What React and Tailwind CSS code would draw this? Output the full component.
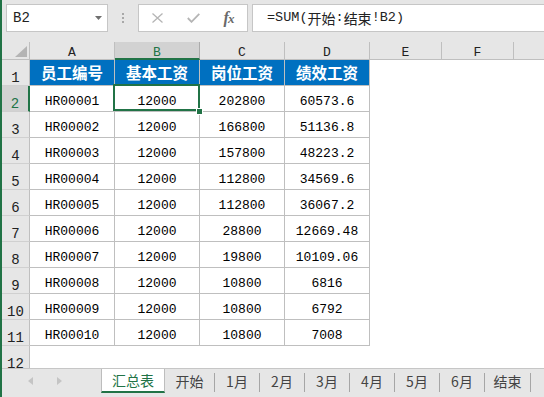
import React from "react";

const rows = [
  ["HR00001", "12000", "202800", "60573.6"],
  ["HR00002", "12000", "166800", "51136.8"],
  ["HR00003", "12000", "157800", "48223.2"],
  ["HR00004", "12000", "112800", "34569.6"],
  ["HR00005", "12000", "112800", "36067.2"],
  ["HR00006", "12000", "28800", "12669.48"],
  ["HR00007", "12000", "19800", "10109.06"],
  ["HR00008", "12000", "10800", "6816"],
  ["HR00009", "12000", "10800", "6792"],
  ["HR00010", "12000", "10800", "7008"],
];

const headers = ["员工编号", "基本工资", "岗位工资", "绩效工资"];
const tabs = [
  { t: "开始", w: "w-[50px]" },
  { t: "1月", w: "w-[45px]" },
  { t: "2月", w: "w-[45px]" },
  { t: "3月", w: "w-[45px]" },
  { t: "4月", w: "w-[45px]" },
  { t: "5月", w: "w-[45px]" },
  { t: "6月", w: "w-[45px]" },
  { t: "结束", w: "w-[46px]" },
];

const mono = "font-['Liberation_Mono','Noto_Sans_CJK_SC',monospace]";
const cjk = "font-['Noto_Sans_CJK_SC',sans-serif]";

function RowHeader({ n, selected }) {
  return (
    <div
      className={`w-[28px] shrink-0 flex justify-center pt-[11px] text-[14px] leading-[14px] ${mono} border-b border-[#d0d0d0] ${
        selected
          ? "bg-[#d2d2d2] text-[#217346] border-r-2 border-r-[#217346]"
          : "bg-[#e6e6e6] text-[#222] border-r border-r-[#bfbfbf]"
      }`}
    >
      {n}
    </div>
  );
}

export default function App() {
  return (
    <div className="w-[544px] h-[397px] overflow-hidden bg-white border-l-2 border-[#217346] flex flex-col">
      {/* toolbar */}
      <div className="h-[42px] shrink-0 bg-[#e6e6e6] flex items-start pt-[4px] pl-[4px]">
        <div className="w-[102px] h-[28px] bg-white border border-[#c6c6c6] flex items-center justify-between pl-[6px] pr-[5px]">
          <span className={`text-[14px] leading-none text-[#222] ${mono}`}>B2</span>
          <svg width="7" height="4" viewBox="0 0 7 4">
            <path d="M0 0 L7 0 L3.5 4 Z" fill="#6f6f6f" />
          </svg>
        </div>
        <div className="w-[30px] h-[28px] flex flex-col items-center justify-center gap-[2px]">
          <span className="w-[2px] h-[2px] bg-[#a8a8a8]" />
          <span className="w-[2px] h-[2px] bg-[#a8a8a8]" />
          <span className="w-[2px] h-[2px] bg-[#a8a8a8]" />
        </div>
        <div className="w-[110px] h-[28px] bg-white border border-[#c6c6c6] flex items-center">
          <span className="w-[36px] flex justify-center">
            <svg width="11" height="10" viewBox="0 0 11 10">
              <path d="M0.5 0.5 L10.5 9.5 M10.5 0.5 L0.5 9.5" stroke="#b5b5b5" strokeWidth="1.3" />
            </svg>
          </span>
          <span className="w-[36px] flex justify-center">
            <svg width="13" height="10" viewBox="0 0 13 10">
              <path d="M0.8 5 L4.5 8.8 L12.3 0.8" stroke="#b5b5b5" strokeWidth="1.8" fill="none" />
            </svg>
          </span>
          <span className="w-[36px] flex justify-center items-baseline italic font-semibold text-[16px] leading-none text-[#6a6a6a] font-['Liberation_Serif',serif]">
            f<span className="text-[13px] -ml-[1px]">x</span>
          </span>
        </div>
        <div className={`ml-[4px] flex-1 h-[28px] bg-white border border-r-0 border-[#c6c6c6] flex items-center pl-[14px] text-[13.5px] leading-none text-[#222] ${mono}`}>
          =SUM(<span className={`text-[14px] ${cjk}`}>开始</span>:<span className={`text-[14px] ${cjk}`}>结束</span>!B2)
        </div>
      </div>

      {/* sheet */}
      <div className="h-[326px] shrink-0 overflow-hidden flex flex-col">
        {/* column headers */}
        <div className={`h-[18px] shrink-0 flex bg-[#e6e6e6] text-[13px] leading-none ${mono}`}>
          <div className="w-[28px] shrink-0 border-r border-b border-[#bfbfbf] flex items-end justify-end pr-[2px] pb-[2px]">
            <svg width="12" height="11" viewBox="0 0 12 11">
              <path d="M12 0 L12 11 L0 11 Z" fill="#b4b4b4" />
            </svg>
          </div>
          <div className="w-[85px] shrink-0 border-r border-b border-[#bfbfbf] text-center pt-[4px] text-[#222]">A</div>
          <div className="w-[85px] shrink-0 border-r border-r-[#ababab] border-b-2 border-b-[#217346] bg-[#d2d2d2] text-center pt-[4px] text-[#217346]">B</div>
          <div className="w-[85px] shrink-0 border-r border-b border-[#bfbfbf] text-center pt-[4px] text-[#222]">C</div>
          <div className="w-[85px] shrink-0 border-r border-b border-[#bfbfbf] text-center pt-[4px] text-[#222]">D</div>
          <div className="w-[72px] shrink-0 border-r border-b border-[#bfbfbf] text-center pt-[4px] text-[#222]">E</div>
          <div className="w-[72px] shrink-0 border-r border-b border-[#bfbfbf] text-center pt-[4px] text-[#222]">F</div>
          <div className="flex-1 border-b border-[#bfbfbf]" />
        </div>

        {/* row 1 */}
        <div className="h-[26px] shrink-0 flex">
          <RowHeader n={1} />
          {headers.map((h) => (
            <div
              key={h}
              className={`w-[85px] shrink-0 bg-[#0070c0] border-r border-b border-[#bfbfbf] flex items-center justify-center text-white font-bold text-[15.5px] leading-none ${cjk}`}
            >
              {h}
            </div>
          ))}
          <div className="flex-1" />
        </div>

        {rows.map((r, i) => (
          <div key={r[0]} className="h-[26px] shrink-0 flex">
            <RowHeader n={i + 2} selected={i === 0} />
            {r.map((v, j) => (
              <div
                key={j}
                className={`relative w-[85px] shrink-0 border-r border-b border-[#bfbfbf] flex justify-center pt-[9px] text-[13px] leading-[13px] text-black ${mono}`}
              >
                {v}
                {i === 0 && j === 1 && (
                  <>
                    <div className="absolute -left-[2px] -top-[2px] w-[87px] h-[27px] border-2 border-[#217346] z-10" />
                    <div className="absolute left-[81px] top-[22px] w-[7px] h-[7px] bg-[#217346] border border-white z-20" />
                  </>
                )}
              </div>
            ))}
            <div className="flex-1" />
          </div>
        ))}

        <div className="h-[26px] shrink-0 flex">
          <RowHeader n={12} />
          <div className="flex-1" />
        </div>
      </div>

      {/* tab bar */}
      <div className="flex-1 bg-[#e6e6e6] border-t border-[#c6c6c6] flex items-start">
        <div className="w-[99px] shrink-0 h-[23px] flex items-center">
          <svg className="ml-[26px]" width="5" height="8" viewBox="0 0 5 8">
            <path d="M5 0 L5 8 L0 4 Z" fill="#c4c4c4" />
          </svg>
          <svg className="ml-[24px]" width="5" height="8" viewBox="0 0 5 8">
            <path d="M0 0 L0 8 L5 4 Z" fill="#c4c4c4" />
          </svg>
        </div>
        <div className={`w-[64px] shrink-0 h-[24px] bg-white border-l border-r border-[#bdbdbd] border-b-2 border-b-[#217346] flex items-center justify-center text-[14px] leading-none text-[#217346] ${cjk}`}>
          汇总表
        </div>
        {tabs.map((t) => (
          <div key={t.t} className={`${t.w} shrink-0 h-[23px] flex items-center`}>
            <span className={`flex-1 text-center text-[14px] leading-none text-[#444] ${cjk}`}>{t.t}</span>
            <span className="w-px h-[19px] mt-[3px] bg-[#a6a6a6]" />
          </div>
        ))}
      </div>
    </div>
  );
}
